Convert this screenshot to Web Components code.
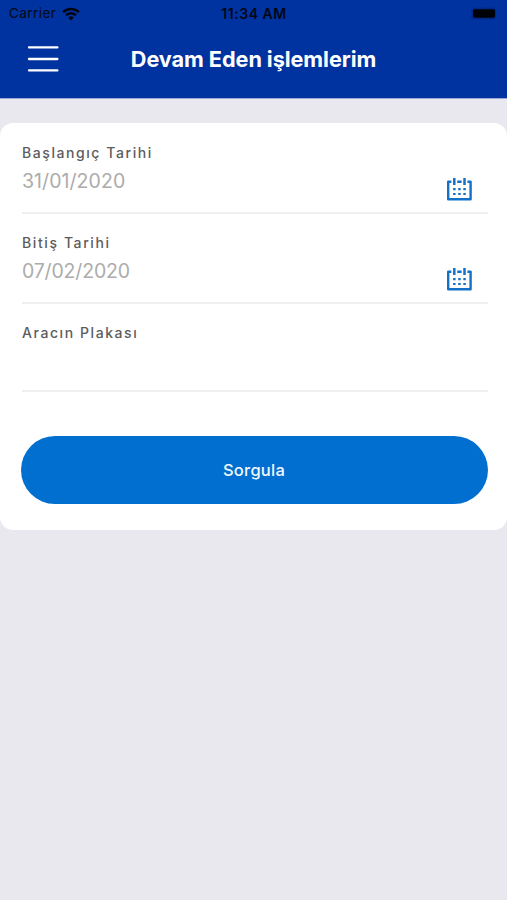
<!DOCTYPE html>
<html lang="tr"><head><meta charset="utf-8"><title>Devam Eden işlemlerim</title>
<style>html,body{margin:0;height:100%;background:#e8e8ee;overflow:hidden;font-family:Inter,"Liberation Sans",sans-serif}</style></head>
<body>
<app-screen>
<app-header slot="header">Devam Eden işlemlerim</app-header>
<query-card>
<form-field label="Başlangıç Tarihi" date style="height:90px;--ls:1.57px">31/01/2020</form-field>
<form-field label="Bitiş Tarihi" date style="height:90px;--ls:1.6px;--vs:-.17px">07/02/2020</form-field>
<form-field label="Aracın Plakası" style="height:88px;--ls:1.57px"></form-field>
<pill-button slot="action">Sorgula</pill-button>
</query-card>
</app-screen>
<script>
const define = (name, html, setup) => customElements.define(name, class extends HTMLElement {
  constructor() {
    super();
    const t = document.createElement('template');
    t.innerHTML = html;
    this.attachShadow({mode: 'open'}).append(t.content.cloneNode(true));
    if (setup) setup(this, this.shadowRoot);
  }
});

define('app-screen', `<style>:host{display:flex;flex-direction:column;gap:25px;width:507px;height:900px;background:#e8e8ee}</style><slot name="header"></slot><slot></slot>`);

define('status-bar', `<style>
:host{display:grid;grid-template-columns:1fr auto 1fr;align-items:center;height:27px;padding:0 9px 0 9px;color:#030818;font-size:13.5px;line-height:27px}
.l{display:flex;align-items:center;gap:6px}
.c{letter-spacing:.42px}
.t{font-weight:600;letter-spacing:.55px;font-size:14px;margin-left:1px}
.b{justify-self:end;display:block}
svg{display:block}
</style>
<div class="l"><span class="c">Carrier</span><svg width="18" height="14" viewBox="0 0 18 14" fill="none" stroke="#020611" stroke-width="2.5"><path d="M1.1 5.2a11.2 11.2 0 0 1 15.8 0M4.1 8.4a6.9 6.9 0 0 1 9.8 0"/><path d="M9 13.4 6.3 10.7a3.8 3.8 0 0 1 5.4 0Z" fill="#020611" stroke="none"/></svg></div>
<span class="t">11:34 AM</span>
<svg class="b" width="28" height="13" viewBox="0 0 28 13"><rect x="1" y="0.5" width="25" height="12" rx="3.5" fill="#002a87"/><rect x="3" y="2.2" width="22" height="8.6" rx="1.8" fill="#000208"/><path d="M27 4.5q1 2 0 4z" fill="#002a87"/></svg>`);

define('app-header', `<style>
:host{display:block;height:98px;background:#0032a0;color:#fff;box-shadow:0 1px 0 #9aabd5}
.bar{display:grid;grid-template-columns:1fr auto 1fr;align-items:center;height:64px}
svg{display:block;margin-left:27px}
h1{margin:0;font-size:21.7px;font-weight:650;letter-spacing:-.08px;white-space:nowrap;line-height:30px}
</style><status-bar></status-bar><div class="bar">
<svg width="33" height="28" viewBox="0 0 33 28" fill="none" stroke="#fff" stroke-width="2.3" stroke-linecap="round"><path d="M2 2.4h28.4M2 14h28.4M2 25.4h28.4"/></svg>
<h1><slot></slot></h1></div>`);

define('query-card', `<style>
:host{display:flex;flex-direction:column;box-sizing:border-box;height:407px;background:#fff;border-radius:13px;padding:0 19.5px 0 20.5px}
.fields{padding-left:1.5px;margin-bottom:44px;padding-top:1px}
</style><div class="fields"><slot></slot></div><slot name="action"></slot>`);

define('form-field', `<style>
:host{display:flex;flex-direction:column;box-sizing:border-box;border-bottom:2px solid #efefef;padding-top:19px}
label{display:block;font-size:14px;font-weight:500;letter-spacing:var(--ls);line-height:20px;color:#5c5c5e}
.row{display:flex;justify-content:space-between}
.value{font-size:19.5px;line-height:28px;color:#acacac;margin-top:4px;letter-spacing:var(--vs,.06px)}
svg{display:block;margin:14px 14.5px 0 0}
</style><label></label><div class="row"><span class="value"><slot></slot></span></div>`, (host, root) => {
  root.querySelector('label').textContent = host.getAttribute('label');
  if (host.hasAttribute('date')) root.querySelector('.row').insertAdjacentHTML('beforeend', `
<svg width="27" height="24" viewBox="0 0 27 24" fill="none" stroke="#1570c8" stroke-width="2.4"><path d="M5.4 4.8H2.2V22.2H24.6V4.8H21.4M11.2 4.8H15.6" stroke-linejoin="round"/><path d="M8.3 1V8M18.5 1V8" stroke-width="2.5"/><path d="M7.1 12.2h12.7M7.1 17h12.7" stroke-width="2.2" stroke-dasharray="2.5 2.6"/></svg>`);
});

define('pill-button', `<style>
:host{display:flex;height:68px;border-radius:34px;background:#006fcf;color:#f2f8ff;align-items:center;justify-content:center;font-size:16.5px;font-weight:500;letter-spacing:.25px}
</style><slot></slot>`);
</script>
</body></html>
